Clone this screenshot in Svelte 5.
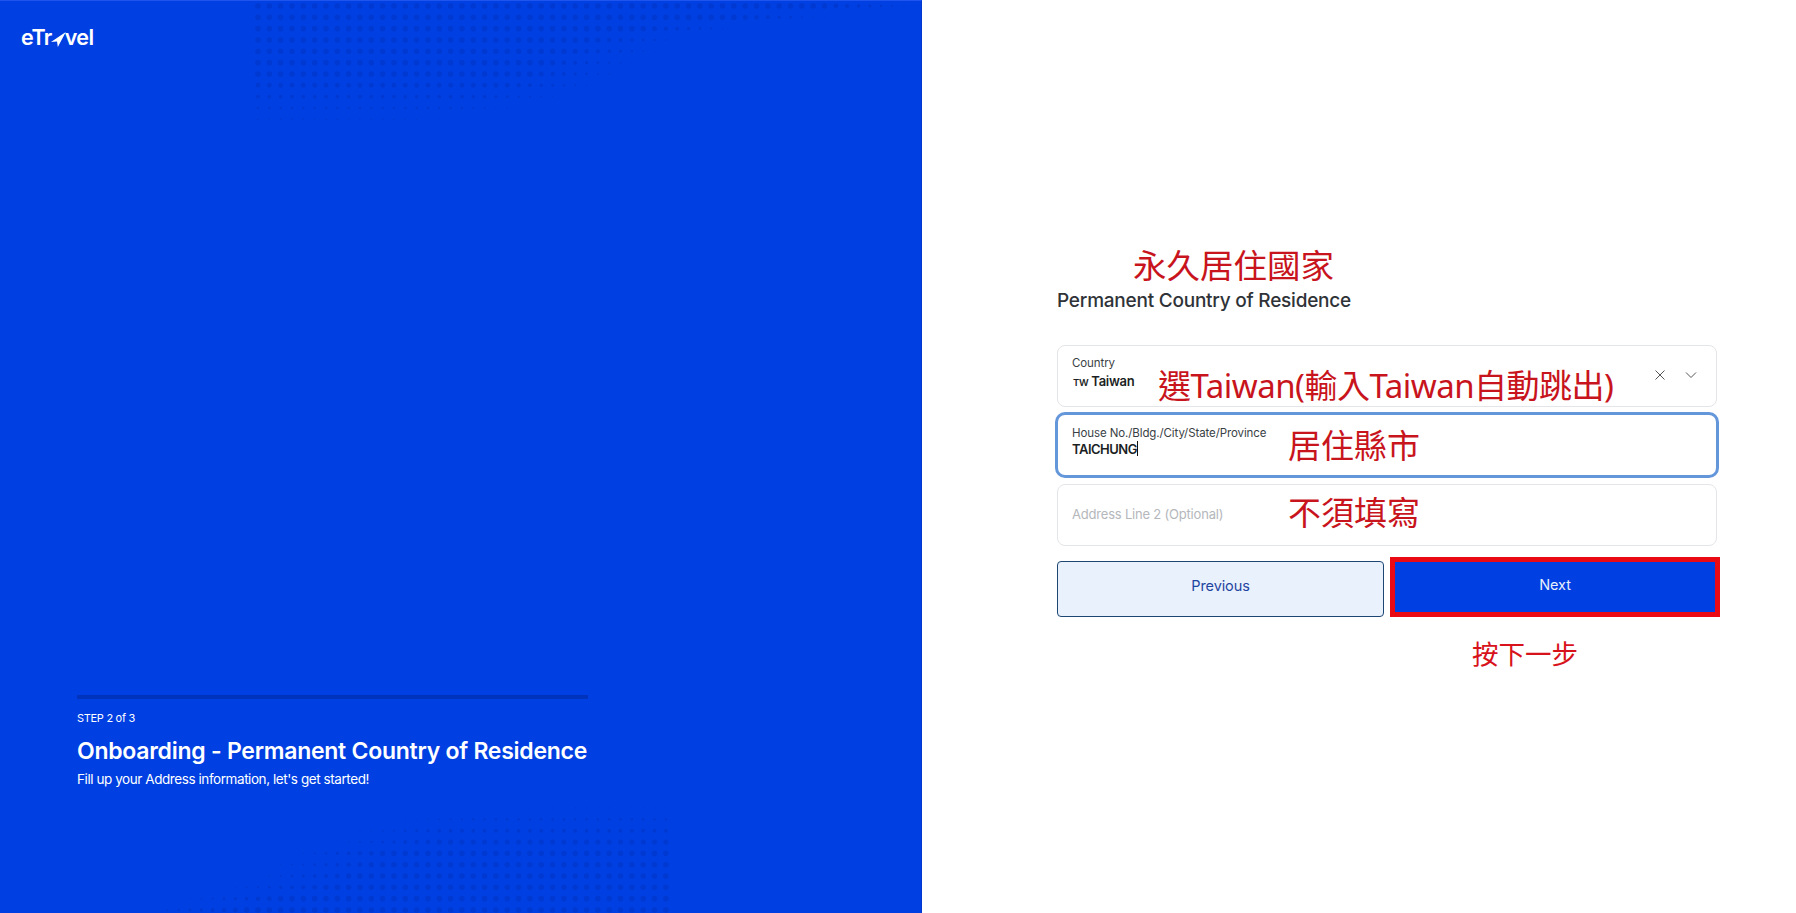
<script lang="ts">
  let houseNo = 'TAICHUNG';

  const STEP = 11.33;
  const clamp = (v: number) => Math.max(0, Math.min(1, v));

  // right edge of the top halftone, row by row
  const topEdge: [number, number][] = [
    [6, 930], [18, 840], [29, 750], [40, 700], [51, 680], [62, 655],
    [74, 640], [85, 620], [96, 590], [108, 565], [119, 510], [130, 350]
  ];
  // left edge of the bottom halftone
  const bottomEdge: [number, number][] = [
    [807, 430], [818, 360], [830, 325], [842, 313], [853, 270],
    [864, 258], [876, 235], [887, 212], [898, 165], [910, 130]
  ];

  function lerp(table: [number, number][], y: number) {
    for (let i = 1; i < table.length; i++) {
      const [y0, x0] = table[i - 1];
      const [y1, x1] = table[i];
      if (y <= y1) return x0 + ((x1 - x0) * (y - y0)) / (y1 - y0);
    }
    return table[table.length - 1][1];
  }

  const dots: { x: number; y: number; r: number }[] = [];
  for (let j = 0; j < 12; j++) {
    const y = 6 + j * STEP;
    for (let i = 0; i < 60; i++) {
      const x = 258 + i * STEP;
      const r = 2.8 * clamp((lerp(topEdge, y) - x) / 110) * clamp((134 - y) / 55);
      if (r > 0.3) dots.push({ x, y, r });
    }
  }
  for (let j = 0; j < 10; j++) {
    const y = 910 - j * STEP;
    for (let i = -12; i <= 36; i++) {
      const x = 258 + i * STEP;
      const r = 2.8 * clamp((x - lerp(bottomEdge, y)) / 120) * clamp((y - 796) / 50);
      if (r > 0.3) dots.push({ x, y, r });
    }
  }
</script>

<div class="page">
  <section class="hero">
    <svg class="halftone" width="922" height="913" aria-hidden="true">
      {#each dots as d}
        <circle cx={d.x} cy={d.y} r={d.r} />
      {/each}
    </svg>

    <div class="logo">
      <span>eTr</span><svg width="15" height="15" viewBox="0 0 14 14" aria-hidden="true">
        <path d="M13.8 0 L0 9.4 L5.6 8.8 L6.4 14 Z" fill="#fff"/>
      </svg><span>vel</span>
    </div>

    <div class="intro">
      <div class="progress"></div>
      <p class="step">STEP 2 of 3</p>
      <h1>Onboarding - Permanent Country of Residence</h1>
      <p class="sub">Fill up your Address information, let's get started!</p>
    </div>
  </section>

  <section class="side">
    <form class="form">
      <span class="note note-title">永久居住國家</span>
      <h2>Permanent Country of Residence</h2>

      <div class="fields">
        <div class="field">
          <span class="label">Country</span>
          <div class="value"><span class="code">TW</span> Taiwan</div>
          <div class="field-icons">
            <svg width="12" height="12" viewBox="0 0 12 12" fill="none" stroke="#555" stroke-width="1" aria-hidden="true">
              <path d="M1.5 1.5l9 9M10.5 1.5l-9 9"/>
            </svg>
            <svg width="12" height="8" viewBox="0 0 12 8" fill="none" stroke="#555" stroke-width="1" aria-hidden="true">
              <path d="M1 1.5l5 5 5-5"/>
            </svg>
          </div>
          <span class="note note-country">選Taiwan(輸入Taiwan自動跳出)</span>
        </div>

        <div class="field focused">
          <span class="label">House No./Bldg./City/State/Province</span>
          <div class="value tight">{houseNo}<i class="caret"></i></div>
          <span class="note note-city">居住縣市</span>
        </div>

        <div class="field empty">
          <span class="placeholder">Address Line 2 (Optional)</span>
          <span class="note note-optional">不須填寫</span>
        </div>
      </div>

      <div class="actions">
        <button type="button" class="btn prev">Previous</button>
        <button type="button" class="btn next">Next</button>
        <span class="note note-next">按下一步</span>
      </div>
    </form>
  </section>
</div>

<style>
  :global(body) {
    margin: 0;
    background: #fff;
    font-family: Inter, "Liberation Sans", sans-serif;
  }

  .page {
    display: flex;
    height: 913px;
    overflow: hidden;
  }

  .hero {
    position: relative;
    width: 922px;
    flex-shrink: 0;
    display: flex;
    flex-direction: column;
    justify-content: space-between;
    box-sizing: border-box;
    background: #0040e2;
    border-top: 1px solid #1f55ee;
    border-right: 1px solid #0238d0;
    color: #fff;
    overflow: hidden;
  }

  .halftone {
    position: absolute;
    left: 0;
    top: -1px;
    fill: #0039d2;
  }

  .logo {
    position: relative;
    display: flex;
    align-items: center;
    margin: 24px 0 0 21px;
    font-size: 21.5px;
    font-weight: 600;
    letter-spacing: -0.6px;
    line-height: 24px;
  }

  .logo svg {
    margin: 5px -1px 0 -1px;
  }

  .intro {
    position: relative;
    width: 511px;
    margin: 0 0 125px 77px;
  }

  .progress {
    height: 4px;
    background: #0033bb;
  }

  .step {
    margin: 11px 0 0;
    font-size: 11px;
    line-height: 16px;
    letter-spacing: -0.3px;
  }

  h1 {
    margin: 10px 0 0;
    font-size: 23px;
    line-height: 30px;
    font-weight: 600;
    white-space: nowrap;
    letter-spacing: -0.26px;
  }

  .sub {
    margin: 4px 0 0;
    font-size: 13.5px;
    line-height: 18px;
    letter-spacing: -0.43px;
  }

  .side {
    flex: 1;
    display: flex;
    flex-direction: column;
    justify-content: center;
    padding-left: 135px;
  }

  .form {
    position: relative;
    width: 660px;
    margin-top: -9px;
  }

  h2 {
    margin: 0 0 31px;
    font-size: 19px;
    line-height: 26px;
    font-weight: 500;
    color: #2f3338;
    letter-spacing: -0.23px;
  }

  .fields {
    display: flex;
    flex-direction: column;
    gap: 6px;
  }

  .field {
    position: relative;
    box-sizing: border-box;
    height: 62px;
    padding: 9px 14px;
    border: 1px solid #e3e5e8;
    border-radius: 8px;
    background: #fff;
  }

  .field.focused {
    height: 66px;
    margin: -1px -2px 0;
    padding: 10px 14px;
    border: 3px solid #6496da;
    border-radius: 10px;
  }

  .field.empty {
    display: flex;
    align-items: center;
    padding-bottom: 11px;
  }

  .label {
    display: block;
    font-size: 11.5px;
    line-height: 16px;
    color: #3a3f45;
    letter-spacing: -0.1px;
  }

  .value {
    margin-top: 1px;
    font-size: 13px;
    line-height: 18px;
    font-weight: 600;
    color: #1b1f24;
    letter-spacing: -0.3px;
  }

  .value.tight {
    margin-top: -1px;
    display: flex;
    align-items: center;
    letter-spacing: -0.5px;
  }

  .code {
    font-size: 9.5px;
    margin-left: 1px;
  }

  .caret {
    width: 1px;
    height: 15px;
    background: #111;
  }

  .placeholder {
    font-size: 13px;
    color: #b4b7bb;
    letter-spacing: -0.2px;
  }

  .field-icons {
    position: absolute;
    right: 19px;
    top: 23px;
    display: flex;
    align-items: center;
    gap: 19px;
  }

  .actions {
    position: relative;
    display: flex;
    gap: 6px;
    margin-top: 15px;
    height: 56px;
  }

  .btn {
    flex-shrink: 0;
    box-sizing: border-box;
    font-family: inherit;
    font-size: 14.5px;
    font-weight: 400;
    height: 56px;
    padding: 0 0 6px;
    cursor: pointer;
    letter-spacing: -0.1px;
  }

  .prev {
    width: 327px;
    background: #e9f1fd;
    border: 1px solid #1d4673;
    border-radius: 4px;
    color: #1f45a0;
  }

  .next {
    width: 330px;
    height: 60px;
    margin-top: -4px;
    padding-bottom: 4px;
    background: #0040e2;
    border: 5px solid #ea0a14;
    border-radius: 0;
    color: #e8effc;
  }

  .note {
    position: absolute;
    color: #c8141c;
    font-family: "Noto Sans", "Noto Sans CJK TC", sans-serif;
    font-size: 33px;
    line-height: 40px;
    white-space: nowrap;
    font-weight: 400;
  }

  .note-title {
    left: 76px;
    top: -43px;
    font-size: 33.5px;
  }

  .note-country {
    left: 100px;
    top: 20px;
    letter-spacing: -0.5px;
  }

  .note-city {
    left: 230px;
    top: 11px;
  }

  .note-optional {
    left: 230px;
    top: 8px;
  }

  .note-next {
    left: 415px;
    top: 73px;
    font-size: 26.5px;
    color: #d8121a;
  }
</style>
